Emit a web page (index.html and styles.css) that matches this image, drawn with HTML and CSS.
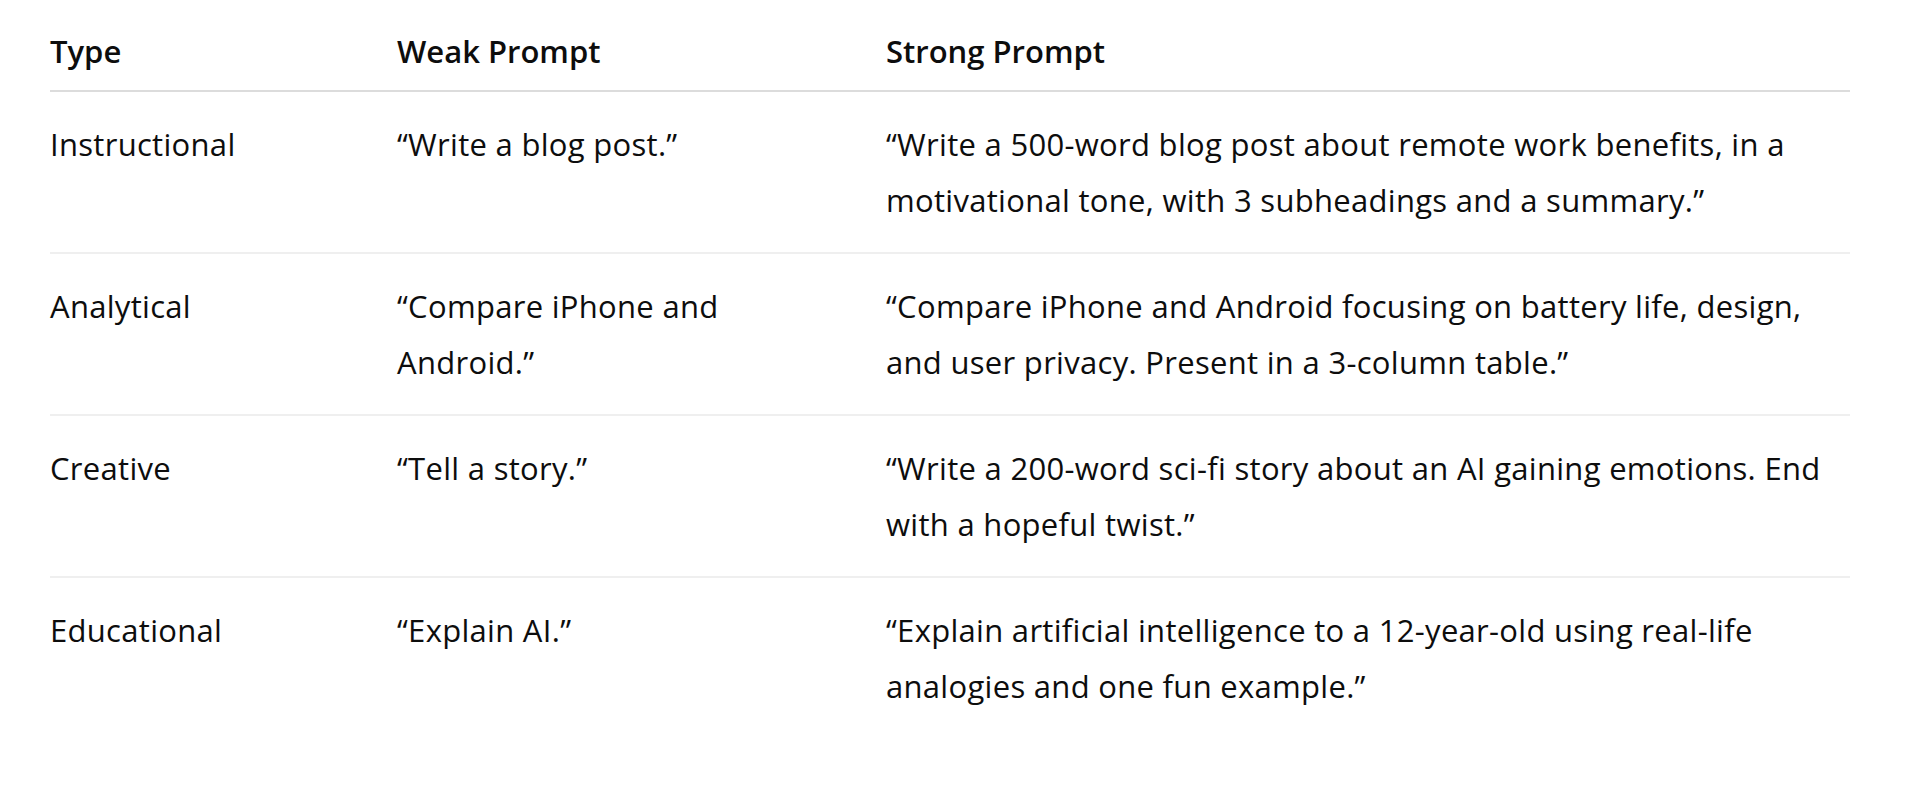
FILE: index.html
```html
<!DOCTYPE html>
<html lang="en">
<head>
<meta charset="utf-8">
<title>Prompt comparison</title>
<link rel="stylesheet" href="styles.css">
</head>
<body>
<div class="page">
  <table class="prompts">
    <colgroup>
      <col class="c-type">
      <col class="c-weak">
      <col class="c-strong">
    </colgroup>
    <thead>
      <tr>
        <th>Type</th>
        <th>Weak Prompt</th>
        <th>Strong Prompt</th>
      </tr>
    </thead>
    <tbody>
      <tr>
        <td>Instructional</td>
        <td>“Write a blog post.”</td>
        <td>“Write a 500-word blog post about remote work benefits, in a motivational tone, with 3 subheadings and a summary.”</td>
      </tr>
      <tr>
        <td>Analytical</td>
        <td>“Compare iPhone and Android.”</td>
        <td>“Compare iPhone and Android focusing on battery life, design, and user privacy. Present in a 3-column table.”</td>
      </tr>
      <tr>
        <td>Creative</td>
        <td>“Tell a story.”</td>
        <td>“Write a 200-word sci-fi story about an AI gaining emotions. End with a hopeful twist.”</td>
      </tr>
      <tr>
        <td>Educational</td>
        <td>“Explain AI.”</td>
        <td>“Explain artificial intelligence to a 12-year-old using real-life analogies and one fun example.”</td>
      </tr>
    </tbody>
  </table>
</div>
</body>
</html>
```
FILE: styles.css
```css
html, body {
  margin: 0;
  padding: 0;
  background: #ffffff;
}

.page {
  padding: 23px 70px 0 50px;
  font-family: "Open Sans", "Noto Sans", sans-serif;
  font-size: 31px;
  letter-spacing: 0.3px;
  line-height: 56px;
  color: #0d0d0d;
}

.prompts {
  width: 1800px;
  border-collapse: collapse;
  table-layout: fixed;
}

.c-type { width: 347px; }
.c-weak { width: 489px; }
.c-strong { width: 964px; }

.prompts th {
  text-align: left;
  font-weight: 600;
  letter-spacing: 0;
  padding: 0 0 11px 0;
  border-bottom: 2px solid #dcdcdc;
  vertical-align: top;
}

.prompts td {
  padding: 24px 0 24px 0;
  border-bottom: 2px solid #efefef;
  vertical-align: top;
}

.prompts td:nth-child(2) {
  padding-right: 60px;
}

.prompts td:nth-child(3) {
  padding-right: 20px;
}

.prompts tbody tr:last-child td {
  border-bottom: none;
}
```
